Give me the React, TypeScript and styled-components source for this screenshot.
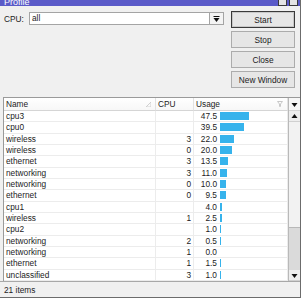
import { Fragment } from "react";
import styled, { createGlobalStyle } from "styled-components";

const GlobalStyle = createGlobalStyle`
  body {
    margin: 0;
    background: #ffffff;
    font-family: "Liberation Sans", Arial, sans-serif;
  }
`;

type Row = { name: string; cpu: string; usage: number };

const rows: Row[] = [
  { name: "cpu3", cpu: "", usage: 47.5 },
  { name: "cpu0", cpu: "", usage: 39.5 },
  { name: "wireless", cpu: "3", usage: 22.0 },
  { name: "wireless", cpu: "0", usage: 20.0 },
  { name: "ethernet", cpu: "3", usage: 13.5 },
  { name: "networking", cpu: "3", usage: 11.0 },
  { name: "networking", cpu: "0", usage: 10.0 },
  { name: "ethernet", cpu: "0", usage: 9.5 },
  { name: "cpu1", cpu: "", usage: 4.0 },
  { name: "wireless", cpu: "1", usage: 2.5 },
  { name: "cpu2", cpu: "", usage: 1.0 },
  { name: "networking", cpu: "2", usage: 0.5 },
  { name: "networking", cpu: "1", usage: 0.0 },
  { name: "ethernet", cpu: "1", usage: 1.5 },
  { name: "unclassified", cpu: "3", usage: 1.0 },
];

const barWidth = (u: number) => (u <= 0 ? 0 : Math.max(1, Math.round(u * 0.62)));

const Window = styled.div`
  width: 301px;
  height: 298px;
  box-sizing: border-box;
  border-right: 1px solid #6c6c6c;
  border-bottom: 1px solid #6c6c6c;
  background: #f0f0f0;
  display: flex;
  flex-direction: column;
  overflow: hidden;
  font-size: 8.3px;
  color: #1c1c1c;
`;

const TitleBar = styled.div`
  height: 6px;
  flex: none;
  background: #5a5ac8;
  display: flex;
  align-items: flex-end;
  justify-content: space-between;
  overflow: hidden;
  padding: 0 2px 0 4px;
`;

const TitleText = styled.span`
  color: #ffffff;
  font-size: 9px;
  line-height: 9px;
  margin-bottom: -1px;
`;

const TitleButtons = styled.div`
  display: flex;
  gap: 2px;
  align-items: flex-end;
`;

const TitleButton = styled.div`
  width: 9px;
  height: 10px;
  background: #e4e4e4;
  border: 1px solid #3a3a3a;
  box-sizing: border-box;
`;

const Top = styled.div`
  display: flex;
  justify-content: space-between;
  padding: 5px 5px 0 4px;
  height: 91px;
  box-sizing: border-box;
  flex: none;
`;

const Field = styled.div`
  display: flex;
  align-items: center;
  height: 13px;
  margin-top: 1px;
`;

const Label = styled.span`
  width: 25px;
`;

const Input = styled.div`
  width: 181px;
  height: 13px;
  box-sizing: border-box;
  background: #ffffff;
  border: 1px solid #a4a4a4;
  padding-left: 2px;
  line-height: 11px;
`;

const DropButton = styled.div`
  width: 14px;
  height: 13px;
  box-sizing: border-box;
  border: 1px solid #a4a4a4;
  border-left: none;
  background: #f4f4f4;
  display: flex;
  align-items: center;
  justify-content: center;
`;

const Buttons = styled.div`
  display: flex;
  flex-direction: column;
  gap: 3px;
`;

const Button = styled.div<{ $default?: boolean }>`
  width: 64px;
  height: 17px;
  box-sizing: border-box;
  border: 1px solid ${(p) => (p.$default ? "#3a3a3a" : "#acacac")};
  box-shadow: ${(p) => (p.$default ? "inset 0 0 0 1px #c8c8c8" : "none")};
  background: #e6e6e6;
  display: flex;
  align-items: center;
  justify-content: center;
`;

const Table = styled.div`
  margin-left: 3px;
  border-left: 1px solid #9a9a9a;
  border-top: 1px solid #9a9a9a;
  display: flex;
  flex: 1;
  min-height: 0;
`;

const Grid = styled.div`
  display: grid;
  grid-template-columns: 152px 38px 94px;
  grid-template-rows: 13px;
  grid-auto-rows: calc(34px / 3);
  background: #ffffff;
  align-content: start;
`;

const HeadCell = styled.div`
  box-sizing: border-box;
  border-right: 1px solid #e2e2e2;
  border-bottom: 1px solid #d5d5d5;
  background: linear-gradient(#ffffff, #f7f7f7);
  display: flex;
  align-items: center;
  justify-content: space-between;
  padding: 0 4px 0 2px;
`;

const Cell = styled.div<{ $align?: "left" | "right" }>`
  box-sizing: border-box;
  border-right: 1px solid #ececec;
  border-bottom: 1px solid #ececec;
  display: flex;
  align-items: center;
  justify-content: ${(p) => (p.$align === "right" ? "flex-end" : "flex-start")};
  padding: 0 2px;
  white-space: nowrap;
`;

const UsageCell = styled(Cell)`
  padding: 0;
`;

const UsageValue = styled.span`
  width: 23px;
  text-align: right;
  flex: none;
`;

const Bar = styled.div`
  height: 8px;
  margin-left: 3px;
  background: #36b3ec;
`;

const Scroll = styled.div`
  width: 12px;
  display: flex;
  flex-direction: column;
  background: #dadada;
  border-left: 1px solid #b9b9b9;
  box-sizing: border-box;
`;

const ScrollHead = styled.div`
  height: 13px;
  flex: none;
  background: #f7f7f7;
  border-bottom: 1px solid #d5d5d5;
  box-sizing: border-box;
  display: flex;
  align-items: center;
  justify-content: center;
`;

const ScrollArrow = styled.div`
  height: 11px;
  flex: none;
  background: #eeeeee;
  border-bottom: 1px solid #d0d0d0;
  box-sizing: border-box;
  display: flex;
  align-items: center;
  justify-content: center;
`;

const Thumb = styled.div`
  height: 106px;
  flex: none;
  background: #f2f2f2;
  border-bottom: 1px solid #b8b8b8;
  box-sizing: border-box;
`;

const Track = styled.div`
  flex: 1;
`;

const StatusBar = styled.div`
  height: 16px;
  flex: none;
  border-top: 1px solid #a8a8a8;
  box-sizing: border-box;
  display: flex;
  align-items: center;
  padding-left: 4px;
`;

const Tri = ({ up, bar }: { up?: boolean; bar?: boolean }) => (
  <svg width="7" height="6" viewBox="0 0 7 6">
    {bar && <rect x="0.5" y="0" width="6" height="1" fill="#111" />}
    {up ? (
      <polygon points="3.5,1 6.5,5 0.5,5" fill="#111" />
    ) : (
      <polygon points="0.5,2 6.5,2 3.5,6" fill="#111" />
    )}
  </svg>
);

const SortMark = () => (
  <svg width="5" height="5" viewBox="0 0 5 5">
    <polyline points="0,5 5,5 5,0 0,5" fill="none" stroke="#d0d0d0" strokeWidth="1" />
  </svg>
);

const FilterMark = () => (
  <svg width="6" height="6" viewBox="0 0 6 6">
    <polygon points="0.5,0.5 5.5,0.5 3.5,3 3.5,5.5 2.5,5.5 2.5,3" fill="none" stroke="#c8c8c8" strokeWidth="1" />
  </svg>
);

export default function App() {
  return (
    <>
      <GlobalStyle />
      <Window>
        <TitleBar>
          <TitleText>Profile</TitleText>
          <TitleButtons>
            <TitleButton />
            <TitleButton />
          </TitleButtons>
        </TitleBar>
        <Top>
          <Field>
            <Label>CPU:</Label>
            <Input>all</Input>
            <DropButton>
              <Tri bar />
            </DropButton>
          </Field>
          <Buttons>
            <Button $default>Start</Button>
            <Button>Stop</Button>
            <Button>Close</Button>
            <Button>New Window</Button>
          </Buttons>
        </Top>
        <Table>
          <Grid>
            <HeadCell>
              Name
              <SortMark />
            </HeadCell>
            <HeadCell>CPU</HeadCell>
            <HeadCell>
              Usage
              <FilterMark />
            </HeadCell>
            {rows.map((r, i) => (
              <Fragment key={i}>
                <Cell>{r.name}</Cell>
                <Cell $align="right">{r.cpu}</Cell>
                <UsageCell>
                  <UsageValue>{r.usage.toFixed(1)}</UsageValue>
                  {barWidth(r.usage) > 0 && <Bar style={{ width: barWidth(r.usage) }} />}
                </UsageCell>
              </Fragment>
            ))}
          </Grid>
          <Scroll>
            <ScrollHead>
              <Tri />
            </ScrollHead>
            <ScrollArrow>
              <Tri up />
            </ScrollArrow>
            <Thumb />
            <Track />
            <ScrollArrow>
              <Tri />
            </ScrollArrow>
          </Scroll>
        </Table>
        <StatusBar>21 items</StatusBar>
      </Window>
    </>
  );
}
